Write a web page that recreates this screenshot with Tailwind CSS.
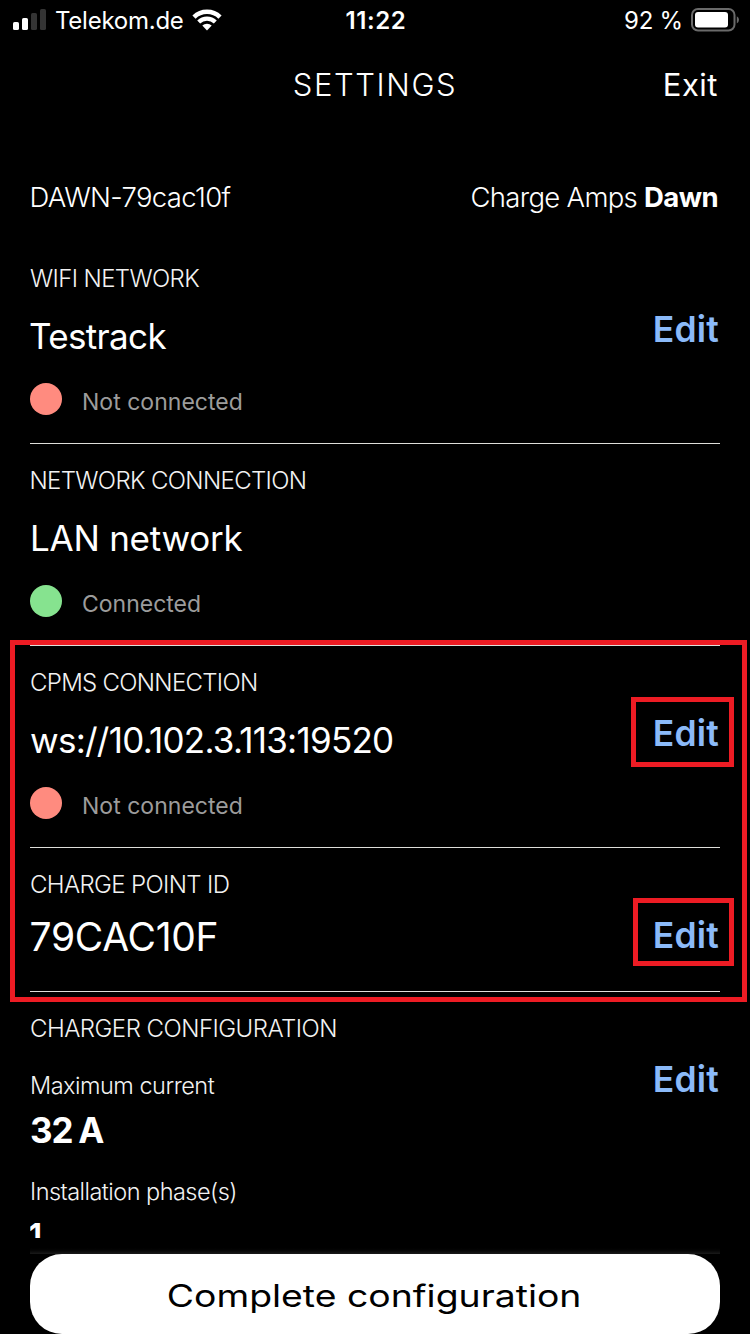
<!DOCTYPE html>
<html lang="en">
<head>
<meta charset="utf-8">
<title>Settings</title>
<script src="https://cdn.jsdelivr.net/npm/@tailwindcss/browser@4"></script>
</head>
<body class="bg-black">
<div class="relative flex h-[1334px] w-[750px] flex-col overflow-hidden whitespace-nowrap bg-black font-[Inter,'Liberation_Sans',sans-serif] text-white">

  <!-- Status bar -->
  <header class="grid h-10 shrink-0 grid-cols-3 items-center pl-[13px] pr-[11px]">
    <div class="flex items-center">
      <svg class="h-[22px] w-[34px] shrink-0" viewBox="0 0 34 22">
        <rect x="0" y="13" width="6" height="8" rx="1.6" fill="#fff"/>
        <rect x="9" y="9" width="6" height="12" rx="1.6" fill="#fff"/>
        <rect x="18" y="4" width="6" height="17" rx="1.6" fill="#343434"/>
        <rect x="27" y="0" width="6" height="21" rx="1.6" fill="#343434"/>
      </svg>
      <span class="ml-[8px] mt-[2px] text-[24px] leading-[30px] tracking-[-0.25px]">Telekom.de</span>
      <svg class="ml-[8px] h-[22px] w-[30px] shrink-0" viewBox="0 0 30 22">
        <path d="M2 8.05A18.7 18.7 0 0 1 28 8.05" fill="none" stroke="#fff" stroke-width="4.6"/>
        <path d="M6.7 12.95A11.9 11.9 0 0 1 23.3 12.95" fill="none" stroke="#fff" stroke-width="4.2"/>
        <path d="M15 21.5L10.3 16.6A6.8 6.8 0 0 1 19.7 16.6Z" fill="#fff"/>
      </svg>
    </div>
    <div class="mt-[2px] text-center text-[24px] font-semibold leading-[30px] tracking-[0.6px]">11:22</div>
    <div class="flex items-center justify-end">
      <span class="mt-[2px] text-[24px] leading-[30px] tracking-[-0.2px]">92 %</span>
      <svg class="ml-[8px] h-[24px] w-[48px] shrink-0" viewBox="0 0 48 24">
        <rect x="1" y="1" width="42.5" height="21.5" rx="6" fill="none" stroke="#6a6a6a" stroke-width="2"/>
        <rect x="4" y="4" width="33" height="15.5" rx="3" fill="#fff"/>
        <path d="M45.8 8.2Q48 9.4 48 11.8T45.8 15.4Z" fill="#6a6a6a"/>
      </svg>
    </div>
  </header>

  <!-- Title bar -->
  <div class="grid h-[90px] shrink-0 grid-cols-3 items-center px-[31px]">
    <span></span>
    <h1 class="text-center text-[31px] font-light leading-10 tracking-[1.6px]">SETTINGS</h1>
    <span class="pr-px text-right text-[31px] leading-10 tracking-[0.5px]">Exit</span>
  </div>

  <!-- Device identity -->
  <div class="flex h-[112px] shrink-0 items-center justify-between pl-[29.5px] pr-[32px] pt-[24px] text-[27.5px] font-light">
    <span class="tracking-[-0.65px]">DAWN-79cac10f</span>
    <span class="flex"><span class="tracking-[-0.7px]">Charge Amps</span><b class="ml-[7px] font-bold tracking-[-0.6px]">Dawn</b></span>
  </div>

  <main class="flex h-[996px] shrink-0 flex-col overflow-hidden px-[30px]">
    <section class="flex h-[202px] shrink-0 justify-between border-b border-[#dededa] pt-[22px]">
      <div class="flex flex-col">
        <h2 class="h-[29px] text-[24px] font-light leading-[29px] tracking-[-0.62px] text-[#f2f2f2]">WIFI NETWORK</h2>
        <p class="-ml-px mt-[18px] h-[51px] text-[35px] leading-[51px] tracking-[-0.65px]">Testrack</p>
        <div class="mt-[21px] flex h-8">
          <i class="size-8 rounded-full bg-[#ff8b7f]"></i>
          <span class="ml-[20px] pt-[3px] text-[23px] leading-8 tracking-[0.02px] text-[#9c9c9c]">Not connected</span>
        </div>
      </div>
      <a class="mr-px mt-[46px] h-10 text-[35.5px] font-semibold leading-10 tracking-[0.2px] text-[#8bbaf9]">Edit</a>
    </section>

    <section class="flex h-[202px] shrink-0 justify-between border-b border-[#dededa] pt-[22px]">
      <div class="flex flex-col">
        <h2 class="-ml-[0.5px] h-[29px] text-[24px] font-light leading-[29px] tracking-[-0.65px] text-[#f2f2f2]">NETWORK CONNECTION</h2>
        <p class="mt-[18px] h-[51px] text-[35px] leading-[51px] tracking-[-0.25px]">LAN network</p>
        <div class="mt-[21px] flex h-8">
          <i class="size-8 rounded-full bg-[#86e38f]"></i>
          <span class="ml-[20px] pt-[3px] text-[23px] leading-8 text-[#9c9c9c]">Connected</span>
        </div>
      </div>
    </section>

    <section class="flex h-[202px] shrink-0 justify-between border-b border-[#dededa] pt-[22px]">
      <div class="flex flex-col">
        <h2 class="h-[29px] text-[24px] font-light leading-[29px] tracking-[-0.7px] text-[#f2f2f2]">CPMS CONNECTION</h2>
        <p class="mt-[18px] h-[51px] text-[35px] leading-[51px] tracking-[-0.74px]">ws://10.102.3.113:19520</p>
        <div class="mt-[21px] flex h-8">
          <i class="size-8 rounded-full bg-[#ff8b7f]"></i>
          <span class="ml-[20px] pt-[3px] text-[23px] leading-8 tracking-[0.02px] text-[#9c9c9c]">Not connected</span>
        </div>
      </div>
      <a class="mr-px mt-[46px] h-10 text-[35.5px] font-semibold leading-10 tracking-[0.2px] text-[#8bbaf9]">Edit</a>
    </section>

    <section class="flex h-[144px] shrink-0 justify-between border-b border-[#dededa] pt-[22px]">
      <div class="flex flex-col">
        <h2 class="h-[29px] text-[24px] font-light leading-[29px] tracking-[-0.63px] text-[#f2f2f2]">CHARGE POINT ID</h2>
        <p class="-ml-[0.5px] mt-[13px] h-[50px] text-[39px] leading-[50px] tracking-[-0.3px]">79CAC10F</p>
      </div>
      <a class="mr-px mt-[46px] h-10 text-[35.5px] font-semibold leading-10 tracking-[0.2px] text-[#8bbaf9]">Edit</a>
    </section>

    <section class="flex h-[246px] shrink-0 justify-between overflow-hidden pt-[22px]">
      <div class="flex flex-col">
        <h2 class="h-[29px] text-[24px] font-light leading-[29px] tracking-[-0.52px] text-[#f2f2f2]">CHARGER CONFIGURATION</h2>
        <p class="mt-[28px] h-[29px] text-[23.5px] font-light leading-[29px] tracking-[-0.5px] text-[#f2f2f2]">Maximum current</p>
        <p class="mt-[10px] h-[41px] text-[35px] font-bold leading-[41px] tracking-[-1px] [word-spacing:-1.6px]">32 A</p>
        <p class="mt-[26px] h-[29px] text-[23.5px] font-light leading-[29px] tracking-[-0.53px] text-[#f2f2f2]">Installation phase(s)</p>
        <p class="-ml-px mt-[9px] h-[41px] text-[33px] font-bold leading-[41px]"><span class="inline-block origin-left scale-x-90">1</span></p>
      </div>
      <a class="mr-px mt-[46px] h-10 text-[35.5px] font-semibold leading-10 tracking-[0.2px] text-[#8bbaf9]">Edit</a>
    </section>
  </main>

  <footer class="flex shrink-0 flex-col px-[30px]">
    <div class="mt-[8px] h-2 bg-linear-to-b from-black to-[#1a1a1a]"></div>
    <button class="flex h-20 items-center justify-center rounded-[32px] bg-white text-black">
      <span class="mr-[2px] mt-[3px] scale-x-[1.205] text-[31px] leading-10">Complete configuration</span>
    </button>
  </footer>

  <!-- Highlight frames -->
  <div class="absolute left-[10px] top-[640px] h-[362px] w-[737px] border-[5px] border-[#ed1c24]"></div>
  <div class="absolute left-[631px] top-[697px] h-[70px] w-[103px] border-[5px] border-[#ed1c24]"></div>
  <div class="absolute left-[633px] top-[898px] h-[68px] w-[101px] border-[5px] border-[#ed1c24]"></div>
</div>
</body>
</html>
